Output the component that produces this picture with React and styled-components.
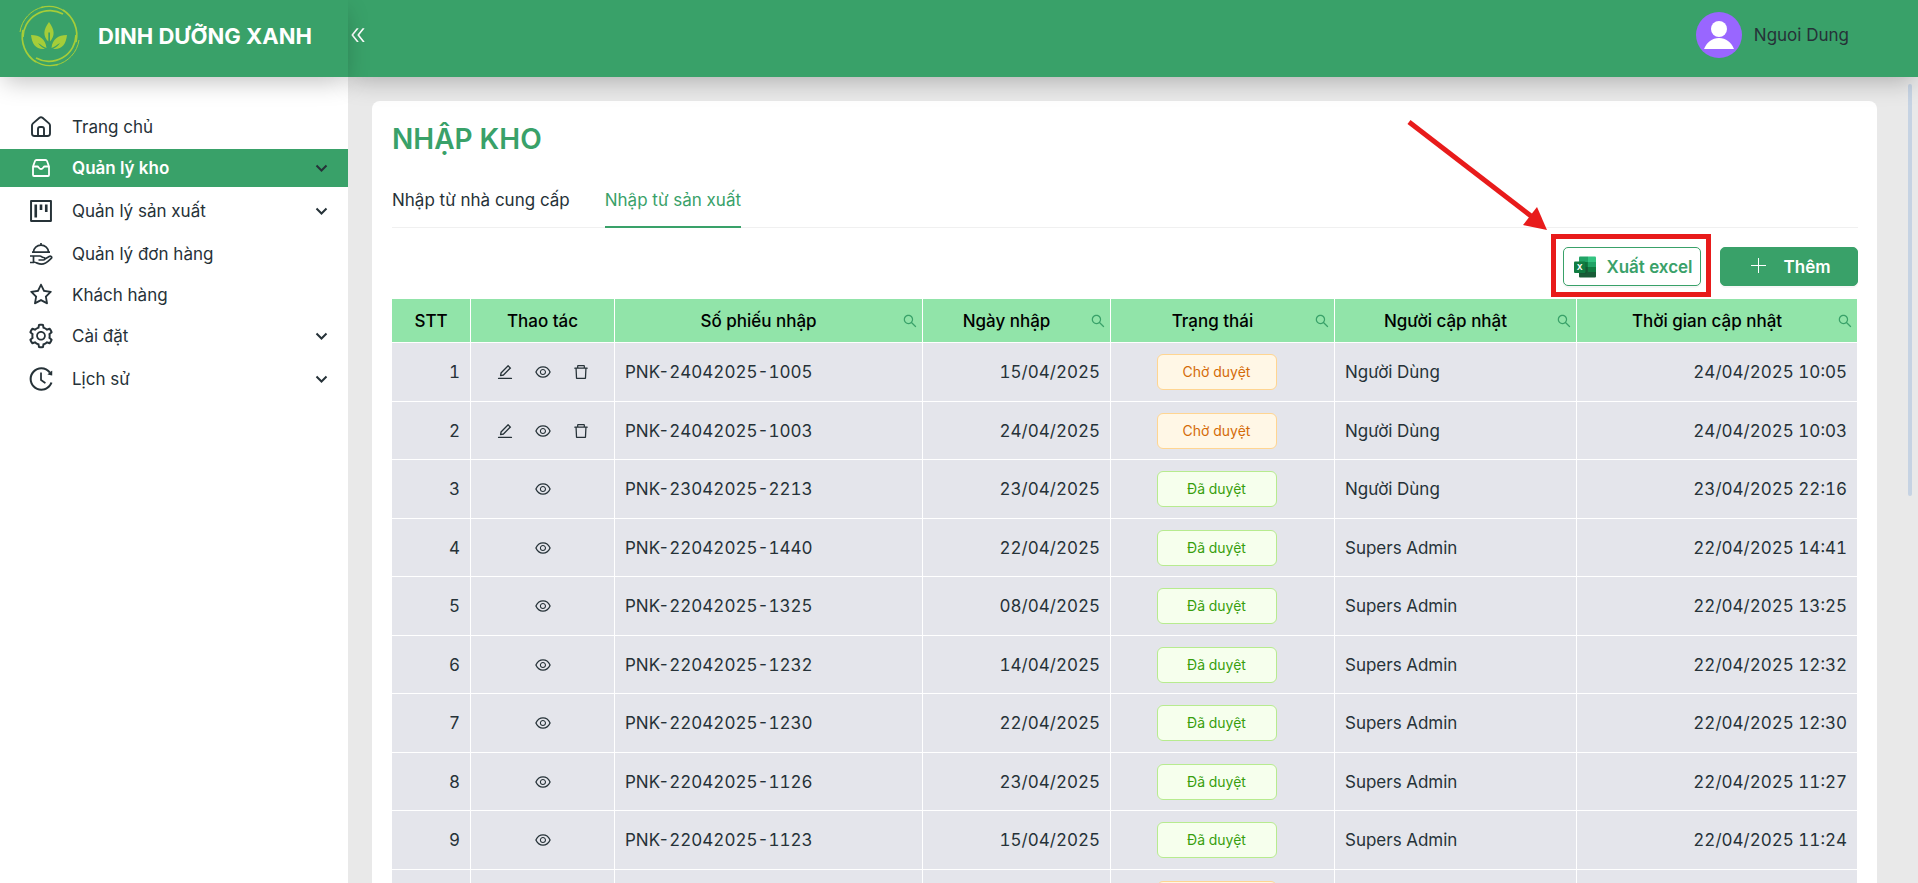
import styled, { createGlobalStyle } from "styled-components";
import {
  AiOutlineDelete,
  AiOutlineDoubleLeft,
  AiOutlineEdit,
  AiOutlineEye,
  AiOutlineHistory,
  AiOutlineProject,
  AiOutlineSearch,
  AiOutlineSetting,
  AiOutlineStar,
} from "react-icons/ai";

const GlobalStyle = createGlobalStyle`
  * {
    box-sizing: border-box;
  }
  body {
    margin: 0;
    background-color: #e9e9e9;
    color: #263238;
    font-family: Inter, "Noto Sans", sans-serif;
    font-size: 17px;
    line-height: 24px;
  }
  button {
    font: inherit;
    color: inherit;
    padding: 0;
    border: none;
    background: none;
    cursor: pointer;
  }
`;

const green = "#39a169";
const shadow = "0 8px 24px -4px rgba(0, 0, 0, 0.26)";

const Layout = styled.div`
  display: flex;
  height: 100vh;
  overflow: hidden;
`;
const Sidebar = styled.aside`
  flex: 0 0 348px;
  background-color: white;
`;
const Brand = styled.div`
  position: relative;
  z-index: 2;
  display: flex;
  align-items: center;
  gap: 18px;
  height: 77px;
  padding: 0 0 6px 19px;
  background-color: ${green};
  box-shadow: ${shadow};
`;
const BrandName = styled.span`
  color: white;
  font-size: 22px;
  font-weight: 700;
  line-height: 28px;
  white-space: nowrap;
`;
const Menu = styled.nav`
  display: flex;
  flex-direction: column;
  padding-top: 30px;
`;
const MenuItem = styled.a`
  display: flex;
  align-items: center;
  height: 38px;
  margin: ${(props) => (props.$tall ? "3px 0 2px" : "1px 0 0")};
  padding: 0 20px 0 29px;
  background-color: ${(props) => (props.$active ? green : "transparent")};
  color: ${(props) => (props.$active ? "white" : "inherit")};
  font-weight: ${(props) => (props.$active ? 600 : 400)};
  text-decoration: none;
`;
const MenuIcon = styled.span`
  display: flex;
  justify-content: center;
  width: 24px;
  svg {
    flex-shrink: 0;
  }
`;
const MenuLabel = styled.span`
  flex: 1;
  margin-left: 19px;
`;
const Chevron = styled.svg`
  width: 13px;
  height: 13px;
  color: #263238;
`;

const Page = styled.div`
  position: relative;
  display: flex;
  flex: 1;
  flex-direction: column;
  min-width: 0;
`;
const Header = styled.header`
  position: relative;
  z-index: 1;
  display: flex;
  flex-shrink: 0;
  align-items: center;
  justify-content: space-between;
  height: 77px;
  padding: 0 69px 8px 0;
  background-color: ${green};
  box-shadow: ${shadow};
`;
const Collapse = styled.button`
  display: flex;
  color: white;
`;
const User = styled.div`
  display: flex;
  align-items: center;
  gap: 12px;
`;
const Content = styled.main`
  flex: 1;
  min-height: 0;
  padding: 24px 41px 0 24px;
  overflow-y: auto;
  scrollbar-width: none;
`;
const Card = styled.section`
  padding: 20px 19px 20px 20px;
  border-radius: 8px;
  background-color: white;
`;
const Title = styled.h1`
  margin: 0;
  color: ${green};
  font-size: 28px;
  font-weight: 600;
  line-height: 36px;
`;
const Tabs = styled.div`
  display: flex;
  gap: 35px;
  margin-top: 19px;
  box-shadow: inset 0 -1px #f0f0f0;
`;
const Tab = styled.button`
  padding: 12px 0 14px;
  border-bottom: 2px solid ${(props) => (props.$active ? green : "transparent")};
  color: ${(props) => (props.$active ? green : "inherit")};
`;
const Toolbar = styled.div`
  display: flex;
  justify-content: flex-end;
  gap: 19px;
  margin: 19px 0 13px;
`;
const Action = styled.button`
  display: flex;
  align-items: center;
  justify-content: center;
  gap: ${(props) => (props.$primary ? "17px" : "10px")};
  width: 138px;
  height: 39px;
  padding-left: 3px;
  border: 1px solid ${green};
  border-radius: 5px;
  background-color: ${(props) => (props.$primary ? green : "white")};
  box-shadow: 0 2px 0 rgba(0, 0, 0, 0.03);
  color: ${(props) => (props.$primary ? "white" : green)};
  font-weight: 600;
`;
const Highlight = styled.div`
  position: relative;
  &::after {
    content: "";
    position: absolute;
    inset: -13px -10px -11px -12px;
    border: 5px solid #e81b1b;
    pointer-events: none;
  }
`;
const Arrow = styled.svg`
  position: absolute;
  right: 152px;
  bottom: 54px;
  width: 144px;
  height: 114px;
  pointer-events: none;
`;

const Table = styled.table`
  width: 100%;
  table-layout: fixed;
  border-collapse: separate;
  border-spacing: 0;
`;
const Th = styled.th`
  height: 44px;
  padding: 0;
  border-right: 1px solid white;
  border-bottom: 1px solid white;
  background-color: #91e4a9;
  color: black;
  font-weight: 500;
`;
const HeadCell = styled.div`
  display: flex;
  align-items: center;
`;
const HeadLabel = styled.span`
  flex: 1;
`;
const SearchButton = styled.button`
  display: flex;
  margin-right: 4px;
  color: ${green};
`;
const Row = styled.tr`
  height: 58px;
  &:nth-child(odd) {
    height: 59px;
  }
`;
const Td = styled.td`
  padding: 0 10px;
  border-right: 1px solid white;
  border-bottom: 1px solid white;
  background-color: #e4e5eb;
  text-align: ${(props) => props.$align || "left"};
  font-variant-numeric: tabular-nums;
`;
const RowActions = styled.div`
  display: flex;
  justify-content: center;
  gap: 20px;
`;
const IconButton = styled.button`
  display: flex;
`;
const Tag = styled.span`
  display: inline-block;
  width: 120px;
  height: 36px;
  margin-right: 12px;
  border: 1px solid ${(props) => (props.$pending ? "#ffd591" : "#b7eb8f")};
  border-radius: 6px;
  background-color: ${(props) => (props.$pending ? "#fff7e6" : "#f6ffed")};
  color: ${(props) => (props.$pending ? "#d46b08" : "#389e0d")};
  font-size: 14px;
  line-height: 34px;
  vertical-align: middle;
`;
const ScrollThumb = styled.div`
  position: absolute;
  top: 84px;
  right: 6px;
  width: 4px;
  height: 412px;
  border-radius: 4px;
  background-color: #c6d3e3;
`;

const Swirl = (props) => (
  <g {...props}>
    <path d="M1 27A30 30 0 0 1 24 2" strokeWidth="1" />
    <path d="M4 32A27 27 0 0 1 44 9" strokeWidth="1.700" />
    <path d="M22 2.500A29 29 0 0 1 46 6.500" strokeWidth="1.300" />
    <path d="M44 5A30 30 0 0 1 57 37" strokeWidth="1.700" />
  </g>
);

const Logo = () => (
  <svg width="61" height="62" viewBox="0 0 61 62" fill="none" stroke="#a5cd39">
    <Swirl />
    <Swirl transform="rotate(180 30.5 31)" />
    <g fill="#a5cd39" stroke="none">
      <path d="M30 17C36 25 36 31 31 36.500V27.500H29.300V36.500C24 31 24 25 30 17Z" />
      <path d="M12 30C21 30 26.500 34 27.500 43C24 42 22 39.500 19 38C21 41 23 42.500 26 44C17 45 13 39 12 30Z" />
      <path d="M48 30C39 30 33.500 34 32.500 43C36 42 38 39.500 41 38C39 41 37 42.500 34 44C43 45 47 39 48 30Z" />
    </g>
  </svg>
);

const HomeIcon = () => (
  <svg width="24" height="24" viewBox="0 0 24 24" fill="none" stroke="currentColor" strokeWidth="1.900" strokeLinejoin="round">
    <path d="M3 10.500C3 9.600 3.300 9 4 8.400L10.500 2.800C11.400 2 12.600 2 13.500 2.800L20 8.400C20.700 9 21 9.600 21 10.500V18.500C21 20 20 21 18.500 21H5.500C4 21 3 20 3 18.500Z" />
    <path d="M9 21V14C9 12.900 9.900 12 11 12H13C14.100 12 15 12.900 15 14V21" />
  </svg>
);

const InboxIcon = () => (
  <svg width="24" height="24" viewBox="0 0 24 24" fill="none" stroke="currentColor" strokeWidth="1.800" strokeLinejoin="round">
    <path d="M4 10.500L6 5C6.300 4.200 6.800 4 7.500 4H16.500C17.200 4 17.700 4.200 18 5L20 10.500V19C20 19.700 19.700 20 19 20H5C4.300 20 4 19.700 4 19Z" />
    <path d="M4 10.500H8.500C9.500 10.500 10 13 12 13S14.500 10.500 15.500 10.500H20" />
  </svg>
);

const ServingIcon = () => (
  <svg width="24" height="24" viewBox="0 0 24 24" fill="none" stroke="currentColor" strokeWidth="1.700" strokeLinejoin="round">
    <path d="M12 1V3M3 10.200H21M4.500 10C4.500 6 8 3.200 12 3.200S19.500 6 19.500 10" />
    <path d="M1 14H4.500V20.500H1M1 14H11C12.500 14 12.500 15.500 14.500 15.500C16.500 15.500 16.300 18 14.500 18H9.500" />
    <path d="M4.500 20C8 20.500 9 22.200 12.500 22.200C17 22.200 19.500 19 22.500 16.200C23.300 14.500 21.500 13.800 20.200 14.500L16 17" />
  </svg>
);

const PlusIcon = () => (
  <svg width="16" height="18" viewBox="0 0 16 18" stroke="currentColor">
    <path d="M0 7.500H15M7.500 0V15" />
  </svg>
);

const ExcelIcon = () => (
  <svg width="22" height="22" viewBox="0 0 22 22">
    <path d="M5 1.500Q5 .5 6 .5H14V6H5Z" fill="#21a366" />
    <path d="M14 .5H21Q22 .5 22 1.500V6H14Z" fill="#33c481" />
    <path d="M5 6H14V11H5Z" fill="#107c41" />
    <path d="M14 6H22V11H14Z" fill="#21a366" />
    <path d="M14 11H22V16H14Z" fill="#107c41" />
    <path d="M5 11H14V16H22V20.500Q22 21.500 21 21.500H6Q5 21.500 5 20.500Z" fill="#185c37" />
    <path d="M5 6H11.500Q12.500 6 12.500 7V16.500Q12.500 17.500 11.500 17.500H5Z" fill="#0b4c2a" opacity="0.5" />
    <rect y="5.500" width="11.500" height="11.500" rx="1" fill="#107c41" />
    <text x="5.800" y="14" fill="white" fontSize="8" fontWeight="700" textAnchor="middle">
      X
    </text>
  </svg>
);

const Avatar = () => (
  <svg width="46" height="46" viewBox="0 0 46 46">
    <circle cx="23" cy="23" r="23" fill="#9966ff" />
    <circle cx="23" cy="17" r="8" fill="white" />
    <path d="M8 37C11 30 16 26 23 26S35 30 38 37Z" fill="white" />
  </svg>
);

const menu = [
  { label: "Trang chủ", icon: <HomeIcon /> },
  { label: "Quản lý kho", icon: <InboxIcon />, tall: true, sub: true, active: true },
  { label: "Quản lý sản xuất", icon: <AiOutlineProject size={28} />, tall: true, sub: true },
  { label: "Quản lý đơn hàng", icon: <ServingIcon />, tall: true },
  { label: "Khách hàng", icon: <AiOutlineStar size={26} /> },
  { label: "Cài đặt", icon: <AiOutlineSetting size={28} />, tall: true, sub: true },
  { label: "Lịch sử", icon: <AiOutlineHistory size={28} />, tall: true, sub: true },
];

const columns = [
  { label: "STT", width: 79 },
  { label: "Thao tác", width: 144 },
  { label: "Số phiếu nhập", width: 308, search: true },
  { label: "Ngày nhập", width: 188, search: true },
  { label: "Trạng thái", width: 224, search: true },
  { label: "Người cập nhật", width: 242, search: true },
  { label: "Thời gian cập nhật", width: 281, search: true },
];

const receipts = [
  ["PNK-24042025-1005", "15/04/2025", true, "Người Dùng", "24/04/2025 10:05"],
  ["PNK-24042025-1003", "24/04/2025", true, "Người Dùng", "24/04/2025 10:03"],
  ["PNK-23042025-2213", "23/04/2025", false, "Người Dùng", "23/04/2025 22:16"],
  ["PNK-22042025-1440", "22/04/2025", false, "Supers Admin", "22/04/2025 14:41"],
  ["PNK-22042025-1325", "08/04/2025", false, "Supers Admin", "22/04/2025 13:25"],
  ["PNK-22042025-1232", "14/04/2025", false, "Supers Admin", "22/04/2025 12:32"],
  ["PNK-22042025-1230", "22/04/2025", false, "Supers Admin", "22/04/2025 12:30"],
  ["PNK-22042025-1126", "23/04/2025", false, "Supers Admin", "22/04/2025 11:27"],
  ["PNK-22042025-1123", "15/04/2025", false, "Supers Admin", "22/04/2025 11:24"],
  ["PNK-22042025-1120", "22/04/2025", true, "Supers Admin", "22/04/2025 11:20"],
];

const App = () => {
  return (
    <Layout>
      <GlobalStyle />
      <Sidebar>
        <Brand>
          <Logo />
          <BrandName>DINH DƯỠNG XANH</BrandName>
        </Brand>
        <Menu>
          {menu.map((item) => (
            <MenuItem key={item.label} href="#" $tall={item.tall} $active={item.active}>
              <MenuIcon>{item.icon}</MenuIcon>
              <MenuLabel>{item.label}</MenuLabel>
              {item.sub && (
                <Chevron viewBox="0 0 13 13" fill="none" stroke="currentColor" strokeWidth="2">
                  <path d="M1.500 3.500L6.500 8.500L11.500 3.500" />
                </Chevron>
              )}
            </MenuItem>
          ))}
        </Menu>
      </Sidebar>
      <Page>
        <Header>
          <Collapse aria-label="Thu gọn">
            <AiOutlineDoubleLeft size={20} />
          </Collapse>
          <User>
            <Avatar />
            <span>Nguoi Dung</span>
          </User>
        </Header>
        <Content>
          <Card>
            <Title>NHẬP KHO</Title>
            <Tabs role="tablist">
              <Tab role="tab">Nhập từ nhà cung cấp</Tab>
              <Tab role="tab" aria-selected="true" $active>
                Nhập từ sản xuất
              </Tab>
            </Tabs>
            <Toolbar>
              <Highlight>
                <Arrow viewBox="0 0 144 114" fill="#e81b1b">
                  <path d="M4 4L126 98" stroke="#e81b1b" strokeWidth="5" />
                  <path d="M142 112L118 107L132 89Z" />
                </Arrow>
                <Action>
                  <ExcelIcon />
                  Xuất excel
                </Action>
              </Highlight>
              <Action $primary>
                <PlusIcon />
                Thêm
              </Action>
            </Toolbar>
            <Table>
              <colgroup>
                {columns.map((column) => (
                  <col key={column.label} width={column.width} />
                ))}
              </colgroup>
              <thead>
                <tr>
                  {columns.map((column) => (
                    <Th key={column.label}>
                      <HeadCell>
                        <HeadLabel>{column.label}</HeadLabel>
                        {column.search && (
                          <SearchButton aria-label={column.label}>
                            <AiOutlineSearch size={16} />
                          </SearchButton>
                        )}
                      </HeadCell>
                    </Th>
                  ))}
                </tr>
              </thead>
              <tbody>
                {receipts.map(([code, date, pending, user, updated], index) => (
                  <Row key={code}>
                    <Td $align="right">{index + 1}</Td>
                    <Td>
                      <RowActions>
                        {pending && (
                          <IconButton aria-label="Sửa">
                            <AiOutlineEdit size={18} />
                          </IconButton>
                        )}
                        <IconButton aria-label="Xem">
                          <AiOutlineEye size={18} />
                        </IconButton>
                        {pending && (
                          <IconButton aria-label="Xóa">
                            <AiOutlineDelete size={18} />
                          </IconButton>
                        )}
                      </RowActions>
                    </Td>
                    <Td>{code}</Td>
                    <Td $align="right">{date}</Td>
                    <Td $align="center">
                      <Tag $pending={pending}>{pending ? "Chờ duyệt" : "Đã duyệt"}</Tag>
                    </Td>
                    <Td>{user}</Td>
                    <Td $align="right">{updated}</Td>
                  </Row>
                ))}
              </tbody>
            </Table>
          </Card>
        </Content>
        <ScrollThumb />
      </Page>
    </Layout>
  );
};

export default App;
